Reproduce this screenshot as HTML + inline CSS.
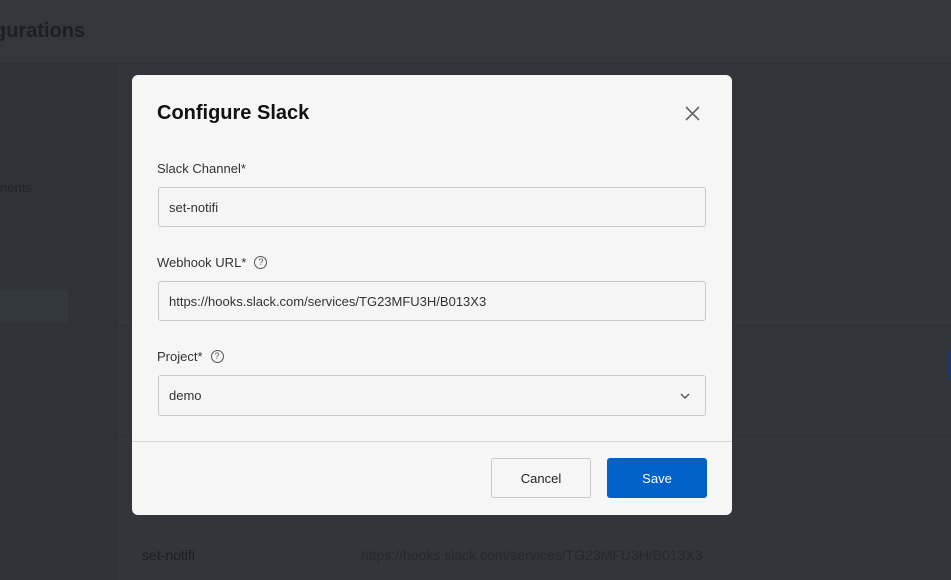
<!DOCTYPE html>
<html><head><style>
*{box-sizing:border-box;margin:0;padding:0}
body{width:951px;height:580px;overflow:hidden;background:#32363b;font-family:"Liberation Sans",sans-serif;position:relative}
.abs{position:absolute}
.lbl{position:absolute;left:157px;font-size:13px;color:#333;display:flex;align-items:center}
.q{display:inline-block;width:13px;height:13px;border:1.2px solid #555;border-radius:50%;font-size:9px;line-height:11px;text-align:center;color:#555;margin-left:8px}
.inp{position:absolute;left:158px;width:548px;border:1px solid #c9c9c9;border-radius:3px;background:#f5f5f5;font-size:13px;color:#333;padding-left:10px;display:flex;align-items:center}
</style></head><body>
<div class="abs" style="left:0;top:0;width:951px;height:64px;background:#33373c;border-bottom:1px solid #2e3136"></div>
<div class="abs" style="left:-6px;top:20px;font-size:20px;font-weight:bold;color:#1c1f23">gurations</div>
<div class="abs" style="left:0;top:65px;width:118px;height:515px;background:#2f3237"></div>
<div class="abs" style="left:0;top:290px;width:68px;height:32px;background:#33373e"></div>
<div class="abs" style="left:0;top:180px;font-size:13px;color:#202327">nents</div>
<div class="abs" style="left:118px;top:325px;width:833px;height:1px;background:#2c2f33"></div>
<div class="abs" style="left:118px;top:436px;width:833px;height:1px;background:#2c2f33"></div>
<div class="abs" style="left:948px;top:350px;width:3px;height:30px;background:#1b3a60"></div>
<div class="abs" style="left:142px;top:547px;font-size:14px;color:#1b1e22">set-notifi</div>
<div class="abs" style="left:361px;top:547px;font-size:14px;color:#25282c">https://hooks.slack.com/services/TG23MFU3H/B013X3</div>

<div class="abs" style="left:132px;top:75px;width:600px;height:440px;background:#f6f6f6;border-radius:6px"></div>
<div class="abs" style="left:157px;top:102px;font-size:20px;font-weight:bold;color:#111">Configure Slack</div>
<svg class="abs" style="left:685px;top:106px" width="15" height="15" viewBox="0 0 15 15"><path d="M1 1L14 14M14 1L1 14" stroke="#666" stroke-width="1.6"/></svg>
<div class="lbl" style="top:161px">Slack Channel*</div>
<div class="inp" style="top:187px;height:40px">set-notifi</div>
<div class="lbl" style="top:255px">Webhook URL*<span class="q">?</span></div>
<div class="inp" style="top:281px;height:40px">https://hooks.slack.com/services/TG23MFU3H/B013X3</div>
<div class="lbl" style="top:349px">Project*<span class="q">?</span></div>
<div class="inp" style="top:375px;height:41px">demo</div>
<svg class="abs" style="left:680px;top:393px" width="10" height="7" viewBox="0 0 10 7"><path d="M1 1L5 5L9 1" stroke="#555" stroke-width="1.4" fill="none"/></svg>
<div class="abs" style="left:132px;top:441px;width:600px;height:1px;background:#d6d6d6"></div>
<div class="abs" style="left:491px;top:458px;width:100px;height:40px;border:1px solid #c9c9c9;border-radius:3px;background:#f6f6f6;font-size:13px;color:#222;display:flex;align-items:center;justify-content:center">Cancel</div>
<div class="abs" style="left:607px;top:458px;width:100px;height:40px;border-radius:3px;background:#0062c8;font-size:13px;color:#fff;display:flex;align-items:center;justify-content:center">Save</div>
</body></html>
